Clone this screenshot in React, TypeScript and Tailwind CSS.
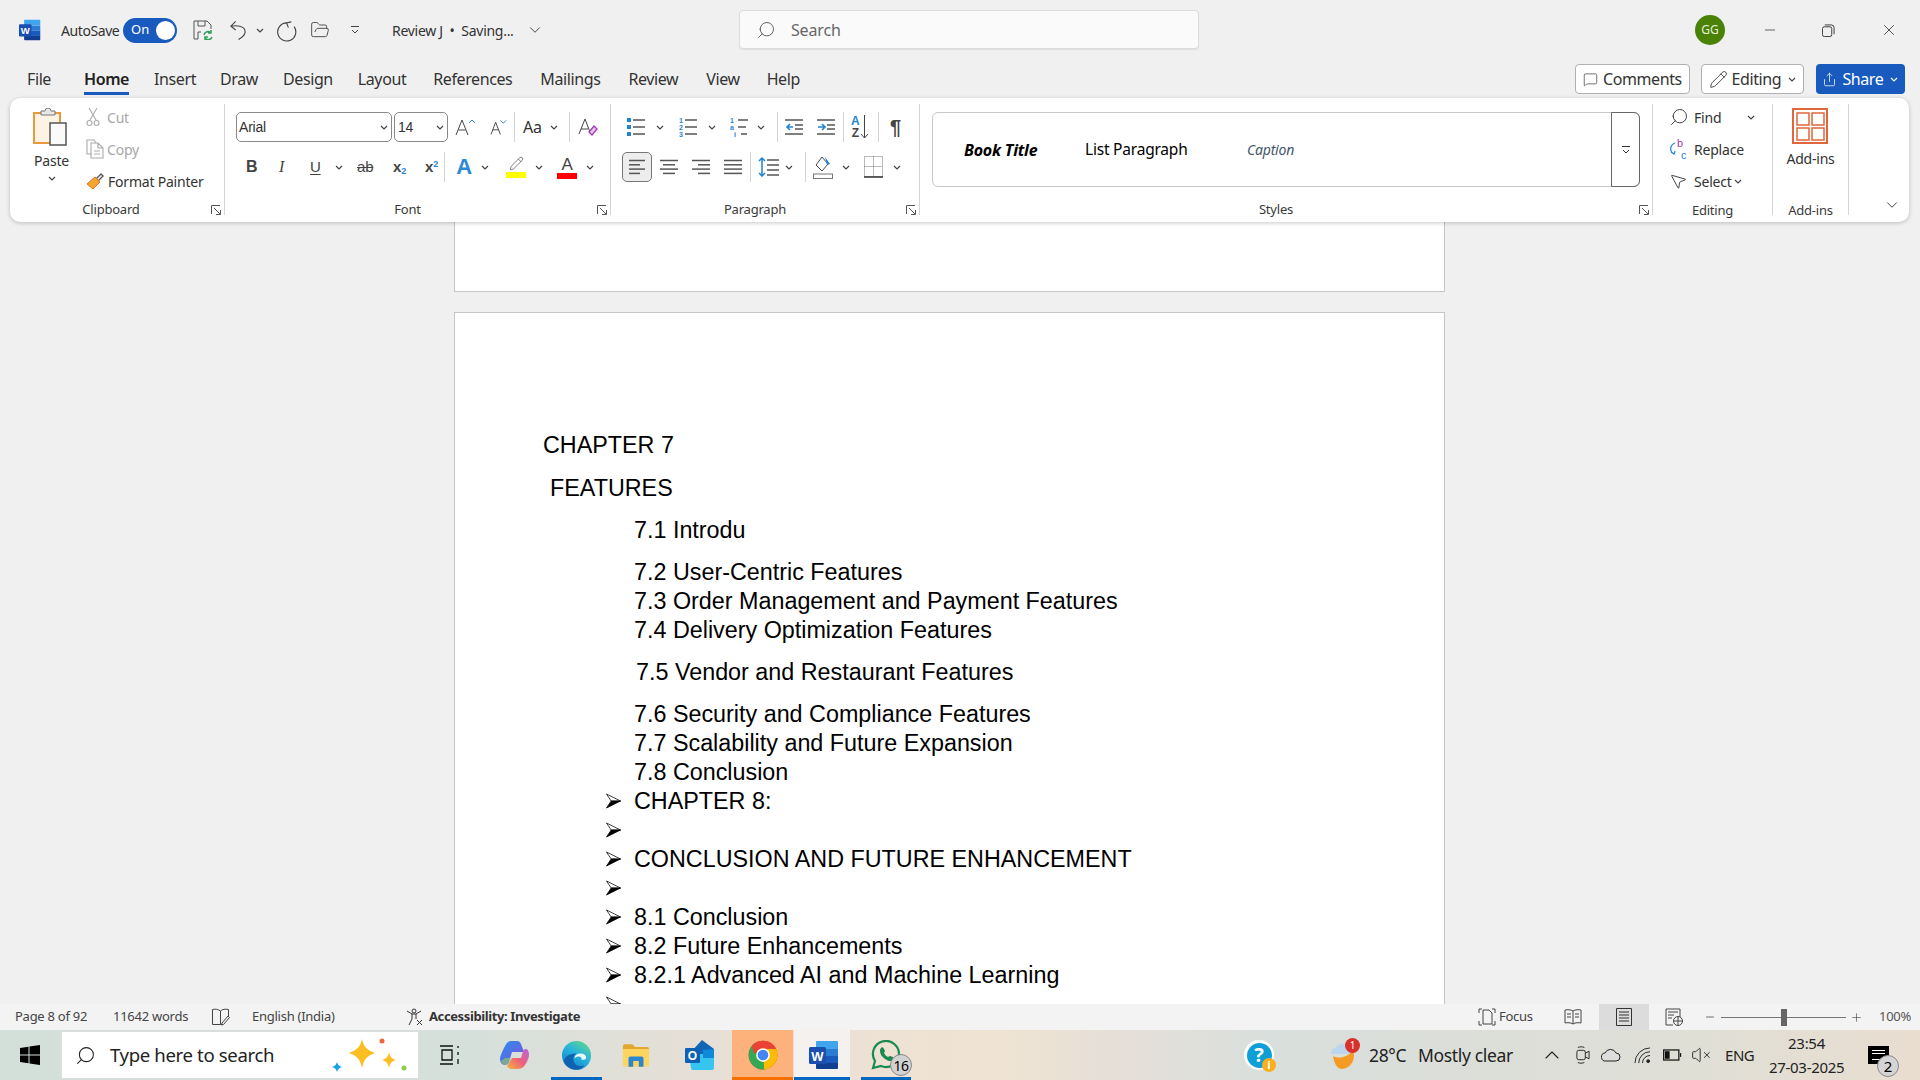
import { ChevronDown, ChevronUp, FolderOpen, MessageSquare, Minus, MousePointer2, Pencil, Plus, Search, Share, VolumeX, X } from 'lucide-react';
import type { ReactNode } from 'react';

const Caret = ({ className = '' }: { className?: string }) => (
  <svg viewBox="0 0 8 5" className={`w-[8px] h-[5px] shrink-0 ${className}`} fill="none" stroke="#444" strokeWidth="1.2">
    <path d="M1 1l3 3 3-3" />
  </svg>
);

const Sep = ({ className = '' }: { className?: string }) => <div className={`w-px h-[30px] bg-[#d4d4d4] shrink-0 ${className}`} />;

const Launcher = ({ className = '' }: { className?: string }) => (
  <svg viewBox="0 0 10 10" className={`absolute bottom-0 w-[10px] h-[10px] ${className}`} fill="none" stroke="#555" strokeWidth="1">
    <path d="M.5 9V.5H9M3 3l6 6M5 9.5h4.5V5" />
  </svg>
);

function Group({ width, label, labelClass = '', children }: { width: string; label: string; labelClass?: string; children: ReactNode }) {
  return (
    <div className={`relative h-[111px] shrink-0 border-r border-[#d4d4d4] flex flex-col ${width}`}>
      <div className="h-[98px] shrink-0">{children}</div>
      <div className={`text-[13px] leading-[14px] text-center text-[#3a3a3a] ${labelClass}`}>{label}</div>
    </div>
  );
}

const Lines = ({ className = '', rows, color = '#555' }: { className?: string; rows: [number, number][]; color?: string }) => (
  <svg viewBox="0 0 18 18" className={`w-[18px] h-[18px] shrink-0 ${className}`} stroke={color} strokeWidth="1.5">
    {rows.map(([a, b], i) => (
      <path key={i} d={`M${a} ${2.5 + i * 4.3}H${b}`} />
    ))}
  </svg>
);

const ListIcon = ({ kind, className = '' }: { kind: 'b' | 'n' | 'm'; className?: string }) => (
  <svg viewBox="0 0 20 20" className={`w-[20px] h-[20px] shrink-0 ${className}`}>
    <g stroke="#555" strokeWidth="1.5">
      <path d={kind === 'm' ? 'M9 3h10M9 10h8M12 17h6' : 'M7 3h12M7 10h12M7 17h12'} />
    </g>
    {kind === 'b' && <path fill="#1f84d6" d="M1 1h4v4H1zM1 8h4v4H1zM1 15h4v4H1z" />}
    {kind !== 'b' && (
      <g fill="#1f84d6" fontSize="7" fontFamily="Liberation Sans, sans-serif" fontWeight="700">
        <text x="1" y="6">1</text>
        <text x="1" y="13">{kind === 'n' ? '2' : 'a'}</text>
        <text x={kind === 'n' ? 1 : 5} y="20">{kind === 'n' ? '3' : 'i'}</text>
      </g>
    )}
  </svg>
);

const Indent = ({ flip = false, className = '' }: { flip?: boolean; className?: string }) => (
  <svg viewBox="0 0 18 18" className={`w-[18px] h-[18px] shrink-0 ${className}`} fill="none">
    <path stroke="#555" strokeWidth="1.4" d="M0 2h18M10 7h8M10 11h8M0 16h18" />
    <path stroke="#1f84d6" strokeWidth="1.6" d={flip ? 'M1 9h6M5 6l3 3-3 3' : 'M8 9H2M5 6L2 9l3 3'} />
  </svg>
);

function WordLogo({ className = '' }: { className?: string }) {
  return (
    <svg viewBox="0 0 30 30" className={className}>
      <path fill="#41a5ee" d="M8 1h20a1 1 0 011 1v7H7V2a1 1 0 011-1z" />
      <path fill="#2b7cd3" d="M7 9h22v7H7z" />
      <path fill="#185abd" d="M7 16h22v7H7z" />
      <path fill="#103f91" d="M7 23h22v5a1 1 0 01-1 1H8a1 1 0 01-1-1z" />
      <rect x="0" y="7" width="17" height="17" rx="1.5" fill="#1a4fb0" />
      <text x="8.5" y="20.5" textAnchor="middle" fill="#fff" fontSize="13" fontWeight="700" fontFamily="Liberation Sans, sans-serif">W</text>
    </svg>
  );
}

const ChromeLogo = () => (
  <svg viewBox="0 0 48 48" className="w-[30px] h-[30px]">
    <defs>
      <clipPath id="chromeClip"><circle cx="24" cy="24" r="23" /></clipPath>
    </defs>
    <g clipPath="url(#chromeClip)">
      <rect width="48" height="48" fill="#ea4335" />
      <path fill="#34a853" d="M24 24L12 2-8 10v40h36z" />
      <path fill="#fbbc04" d="M24 14h24v34H26z" />
      <path fill="#ea4335" d="M3 0h45v14H24L10 22z" />
    </g>
    <circle cx="24" cy="24" r="11" fill="#fff" />
    <circle cx="24" cy="24" r="8.5" fill="#4285f4" />
  </svg>
);

const EdgeLogo = () => (
  <svg viewBox="0 0 32 32" className="w-[31px] h-[31px]">
    <defs>
      <linearGradient id="edgeA" x1="0.8" y1="0" x2="0.2" y2="1">
        <stop offset="0" stopColor="#5fd68a" />
        <stop offset="0.45" stopColor="#25b4e0" />
        <stop offset="1" stopColor="#1478c8" />
      </linearGradient>
    </defs>
    <circle cx="16" cy="16" r="15" fill="url(#edgeA)" />
    <path fill="#0f62ad" d="M3 22c2 6 10 10 16 8 2-1 4-2 5-4-5 2-10 1-11-5-1-3 1-6 3-7-6 0-12 2-13 8z" />
    <path fill="#eef8f6" d="M14 19c0-3 3-5 6-5 4 0 6 2 6 4 0 2-3 3-5 2 1-2-1-3-3-3-2 0-3 1-4 2z" />
  </svg>
);

const CopilotLogo = () => (
  <svg viewBox="0 0 30 30" className="w-[30px] h-[30px]">
    <defs>
      <linearGradient id="copA" x1="0" y1="0" x2="1" y2="1">
        <stop offset="0" stopColor="#2b8ff0" />
        <stop offset="1" stopColor="#7e4fd8" />
      </linearGradient>
      <linearGradient id="copB" x1="0" y1="1" x2="1" y2="0">
        <stop offset="0" stopColor="#f5b63a" />
        <stop offset="0.5" stopColor="#ef5f7a" />
        <stop offset="1" stopColor="#b766e0" />
      </linearGradient>
    </defs>
    <path fill="url(#copA)" d="M12 1h6c2 0 3 1 4 3l3 8H13l-3 10c-1 2-2 3-4 3-3 0-5-3-5-6 0-3 2-7 4-11 2-4 4-7 7-7z" />
    <path fill="url(#copB)" d="M18 29h-6c-2 0-3-1-4-3l5-8h9l2-7c1-2 2-2 3-2 2 0 3 3 3 6 0 3-2 7-4 10-2 3-5 4-8 4z" />
    <path fill="#8fd35f" d="M2 21c1 3 3 4 5 4 1 0 2-1 3-3l2-4H6z" opacity=".6" />
  </svg>
);

const FilesLogo = () => (
  <svg viewBox="0 0 30 26" className="w-[28px] h-[25px]">
    <path fill="#e3a72f" d="M1 3a2 2 0 012-2h8l3 3h13a2 2 0 012 2v3H1z" />
    <path fill="#fbd55f" d="M1 6h28v17a2 2 0 01-2 2H3a2 2 0 01-2-2z" />
    <path fill="#2a86d1" d="M7 25v-9a2 2 0 012-2h12a2 2 0 012 2v9h-5v-6h-6v6z" />
  </svg>
);

const OutlookLogo = () => (
  <svg viewBox="0 0 30 32" className="w-[30px] h-[32px]">
    <path fill="#1066b5" d="M17 1l12 9v6L16 22 5 14z" />
    <path fill="#36c5f0" d="M4 15h25v14a2 2 0 01-2 2H8a2 2 0 01-2-2z" />
    <path fill="#0f8ad8" d="M18 11l11-1v9H18z" />
    <rect x="0" y="9" width="15" height="15" rx="1" fill="#0f62b3" />
    <text x="7.5" y="21" textAnchor="middle" fill="#fff" fontSize="12" fontWeight="700" fontFamily="Liberation Sans, sans-serif">O</text>
  </svg>
);

const WhatsApp = () => (
  <svg viewBox="0 0 30 30" className="w-[30px] h-[30px]" fill="none">
    <path stroke="#198a50" strokeWidth="2.2" d="M2 28l2-7A13 13 0 1110 26z" />
    <path fill="#198a50" d="M10 8c1-1 2-1 3 1l1 2-1 2c1 2 2 3 4 4l2-1 3 1c1 1 1 2 0 3-2 2-5 1-8-1-3-2-5-5-5-8 0-1 0-2 1-3z" />
  </svg>
);

const Sparkles = () => (
  <svg viewBox="0 0 76 36" className="w-[76px] h-[36px]">
    <path fill="#fbbf24" d="M30 2c2 8 5 11 13 14-8 3-11 6-13 15-2-9-5-12-13-15 8-3 11-6 13-14z" />
    <path fill="#fbbf24" d="M57 15c1 5 3 7 7 8-4 1-6 3-7 8-1-5-3-7-7-8 4-1 6-3 7-8z" />
    <path fill="#1ba1e8" d="M5 25c1 3 2 4 5 5-3 1-4 2-5 5-1-3-2-4-5-5 3-1 4-2 5-5z" />
    <circle cx="50" cy="4" r="2.5" fill="#f0683a" />
    <circle cx="72" cy="31" r="2.5" fill="#8ccf3f" />
  </svg>
);

// Word's arrow bullet: white upper half, black lower half
const Bullet = () => (
  <span className="w-[28px] ml-[1px] shrink-0 flex items-center">
    <svg viewBox="0 0 16 16" className="w-[15px] h-[16px] mt-[-2px] shrink-0">
      <path d="M.5.5L15.5 8H5.5z" fill="#fff" stroke="#000" strokeWidth=".8" />
      <path d="M.5 15.5L15.5 8H5.5z" fill="#000" stroke="#000" strokeWidth=".8" />
    </svg>
  </span>
);

function DocLine({ className = 'pl-[179px]', bullet = false, children }: { className?: string; bullet?: boolean; children?: ReactNode }) {
  return (
    <div className={`h-[29px] leading-[29px] flex whitespace-pre ${bullet ? 'pl-[150px]' : className}`}>
      {bullet && <Bullet />}
      {children}
    </div>
  );
}

export default function App() {
  return (
    <div className="w-full h-screen overflow-hidden flex flex-col bg-[#f0f0f0] text-[#333] font-['Noto_Sans',sans-serif]">
      {/* title bar */}
      <div className="h-[60px] shrink-0 flex items-center">
        <WordLogo className="w-[22px] h-[22px] ml-[19px] shrink-0" />
        <span className="ml-[20px] w-[62px] text-[14px] tracking-[-0.03em]">AutoSave</span>
        <div className="w-[54px] h-[25px] rounded-full bg-[#185abd] flex items-center justify-between pl-[8px] pr-[2px] text-white text-[13px]">
          On
          <div className="w-[19px] h-[19px] rounded-full bg-white" />
        </div>
        <svg viewBox="0 0 20 20" className="ml-[16px] w-[20px] h-[20px]" fill="none" stroke="#555">
          <path d="M1 1h13l4 4v4M5 19H1V1M5 1v5h7V1M5 19v-7h3" />
          <path stroke="#2f9e58" strokeWidth="1.5" d="M11 15a4 4 0 017-2m1 4a4 4 0 01-7 1M18 10v3h-3M12 20v-3h3" />
        </svg>
        <svg viewBox="0 0 20 22" className="ml-[16px] w-[19px] h-[22px]" fill="none" stroke="#444" strokeWidth="1.2">
          <path d="M7 2L2 7l5 4M2 7c5-1 15-1 15 6 0 4-4 6-7 8" />
        </svg>
        <Caret className="ml-[8px]" />
        <svg viewBox="0 0 22 24" className="ml-[12px] w-[21px] h-[23px]" fill="none" stroke="#444" strokeWidth="1.2">
          <path d="M6 3l5 1-2 5M11 4a9.5 9.5 0 11-8 4" transform="matrix(-1 0 0 1 22 0)" />
        </svg>
        <FolderOpen className="ml-[13px] w-[20px] h-[20px]" strokeWidth={1.1} color="#444" />
        <svg viewBox="0 0 10 10" className="ml-[20px] w-[10px] h-[10px]" fill="none" stroke="#444">
          <path d="M1 1.5h8M2 5l3 3 3-3" />
        </svg>
        <span className="ml-[32px] w-[130px] text-[14px] tracking-[-0.02em] whitespace-nowrap">Review J&nbsp; •&nbsp; Saving...</span>
        <ChevronDown className="ml-[4px] w-[18px] h-[18px]" strokeWidth={1.2} />
        <div className="ml-[195px] mt-[-1px] w-[460px] h-[39px] bg-[#fafafa] border border-[#dcdcdc] rounded-[4px] shadow-[0_1px_1px_rgba(0,0,0,0.08)] flex items-center">
          <Search className="ml-[16px] w-[20px] h-[20px] -scale-x-100" strokeWidth={1.1} color="#555" />
          <span className="ml-[15px] text-[16px] text-[#666] tracking-[-0.01em]">Search</span>
        </div>
        <div className="ml-[496px] w-[30px] h-[30px] rounded-full bg-[#498205] text-[#e8f0dc] text-[12px] flex items-center justify-center">GG</div>
        <Minus className="ml-[37px] w-[16px] h-[16px]" strokeWidth={1.1} />
        <svg viewBox="0 0 14 14" className="ml-[44px] w-[13px] h-[13px]" fill="none" stroke="#333">
          <rect x=".5" y="3" width="10" height="10.5" rx="2" />
          <path d="M3 1h7a3 3 0 013 3v7" />
        </svg>
        <X className="ml-[45px] w-[18px] h-[18px]" strokeWidth={1.1} />
      </div>

      {/* tabs */}
      <div className="h-[38px] shrink-0 flex items-center text-[16px] tracking-[-0.025em] pl-[27px]">
        <span>File</span>
        <span className="relative ml-[33px] h-full flex items-center font-semibold text-[#222]">
          Home
          <span className="absolute left-0 right-0 top-[32px] h-[3px] bg-[#185abd]" />
        </span>
        <span className="ml-[25px]">Insert</span>
        <span className="ml-[24px]">Draw</span>
        <span className="ml-[25px]">Design</span>
        <span className="ml-[25px]">Layout</span>
        <span className="ml-[27px]">References</span>
        <span className="ml-[28px]">Mailings</span>
        <span className="ml-[28px]">Review</span>
        <span className="ml-[28px]">View</span>
        <span className="ml-[27px]">Help</span>
        <button className="ml-[775px] w-[115px] h-[30px] border border-[#b0b0b0] rounded-[4px] bg-white flex items-center justify-center gap-[5px]">
          <MessageSquare className="w-[15px] h-[15px]" strokeWidth={1.1} />
          Comments
        </button>
        <button className="ml-[11px] w-[103px] h-[30px] border border-[#b0b0b0] rounded-[4px] bg-white flex items-center justify-center gap-[4px]">
          <Pencil className="w-[19px] h-[19px]" strokeWidth={1.1} />
          Editing
          <Caret className="ml-[3px]" />
        </button>
        <button className="ml-[12px] w-[89px] h-[30px] rounded-[4px] bg-[#185abd] text-white flex items-center justify-center gap-[5px]">
          <Share className="w-[15px] h-[15px]" strokeWidth={1.2} />
          Share
          <svg viewBox="0 0 8 5" className="w-[8px] h-[5px] ml-[2px]" fill="none" stroke="#fff" strokeWidth="1.2"><path d="M1 1l3 3 3-3" /></svg>
        </button>
      </div>

      {/* ribbon */}
      <div className="relative z-10 ml-[10px] w-[1899px] h-[124px] shrink-0 bg-white rounded-[10px] shadow-[0_1px_4px_rgba(0,0,0,0.22)] flex pt-[6px] text-[14px] tracking-[-0.015em]">
        <Group width="w-[215px]" label="Clipboard" labelClass="pr-[12px]">
          <div className="flex">
            <div className="w-[83px] flex flex-col items-center">
              <svg viewBox="0 0 34 38" className="ml-[-4px] mt-[4px] w-[34px] h-[38px]" fill="none">
                <rect x="1" y="5" width="26" height="30" fill="#fdf3e4" stroke="#e89a3c" strokeWidth="2" />
                <path fill="#e8e8e8" stroke="#777" d="M8 7V3h4a3 3 0 016 0h4v4z" />
                <rect x="17" y="15" width="16" height="22" fill="#fafafa" stroke="#555" strokeWidth="1.5" />
              </svg>
              <span className="mt-[6px] leading-[18px]">Paste</span>
              <Caret className="mt-[6px]" />
            </div>
            <div className="flex flex-col mt-[-3px] pl-[6px] text-[#333]">
              <div className="h-[32px] flex items-center text-[#a8a8a8]">
                <svg viewBox="0 0 14 20" className="ml-[-13px] mr-[7px] w-[14px] h-[20px]" fill="none" stroke="#aaa" strokeWidth="1.1">
                  <path d="M3 1l7 12M11 1L4 13" />
                  <circle cx="3.5" cy="16" r="2.5" />
                  <circle cx="10.5" cy="16" r="2.5" />
                </svg>
                Cut
              </div>
              <div className="h-[32px] flex items-center text-[#a8a8a8]">
                <svg viewBox="0 0 18 20" className="ml-[-13px] mr-[3px] w-[18px] h-[20px]" fill="none" stroke="#aaa" strokeWidth="1.1">
                  <path d="M6 15H1V1h7l2 3" />
                  <path d="M5 4h7l5 5v10H5zM12 4v5h5M8 12h6M8 15h6" />
                </svg>
                Copy
              </div>
              <div className="h-[32px] flex items-center whitespace-nowrap">
                <svg viewBox="0 0 18 18" className="ml-[-13px] mr-[4px] w-[18px] h-[18px]" fill="none">
                  <path stroke="#555" strokeWidth="1.4" d="M10 7l5-5 2 2-5 5" />
                  <path fill="#f4a52e" stroke="#e0701e" d="M9 5l5 5-7 7-6-5z" />
                </svg>
                Format Painter
              </div>
            </div>
          </div>
          <Launcher className="right-[3px]" />
        </Group>

        <Group width="w-[386px]" label="Font" labelClass="pr-[20px]">
          <div className="flex items-center h-[30px] mt-[8px] pl-[11px]">
            <div className="w-[156px] h-[30px] border border-[#8a8a8a] rounded-[5px] flex items-center justify-between pl-[2px] pr-[3px] font-['Liberation_Sans',sans-serif]">
              Arial <Caret />
            </div>
            <div className="ml-[2px] w-[54px] h-[30px] border border-[#8a8a8a] rounded-[5px] flex items-center justify-between pl-[3px] pr-[3px] font-['Liberation_Sans',sans-serif]">
              14 <Caret />
            </div>
            <svg viewBox="0 0 20 18" className="ml-[7px] w-[20px] h-[18px]" fill="none">
              <path stroke="#444" d="M1 17L7 2l6 15M3.5 12h7" />
              <path stroke="#1f84d6" d="M14 5l3-3 3 3" />
            </svg>
            <svg viewBox="0 0 18 18" className="ml-[15px] w-[17px] h-[18px]" fill="none">
              <path stroke="#444" d="M1 17L6 4l5 13M3 12h6" />
              <path stroke="#1f84d6" d="M11 2l3 3 3-3" />
            </svg>
            <Sep className="ml-[7px]" />
            <span className="ml-[8px] w-[21px] text-[16px]">Aa</span>
            <Caret className="ml-[6px]" />
            <Sep className="ml-[11px]" />
            <svg viewBox="0 0 20 20" className="ml-[8px] w-[20px] h-[20px]" fill="none">
              <path stroke="#444" d="M1 17L7 2l5 13" />
              <path stroke="#444" d="M3 12h7" />
              <path fill="#e9c6f0" stroke="#a23bb5" strokeWidth="1.3" d="M11 15l5-6 3 3-5 6z" />
            </svg>
          </div>
          <div className="flex items-center h-[30px] mt-[10px] pl-[21px] text-[#444] font-['Liberation_Sans',sans-serif]">
            <span className="w-[10px] text-[16px] font-bold">B</span>
            <span className="ml-[23px] w-[10px] text-[16px] italic font-['Liberation_Serif',serif]">I</span>
            <span className="ml-[21px] w-[11px] text-[15px] underline underline-offset-2">U</span>
            <Caret className="ml-[14px]" />
            <span className="ml-[14px] w-[20px] text-[15px] line-through">ab</span>
            <span className="ml-[16px] w-[16px] text-[15px] font-bold">x<sub className="text-[9px] text-[#1f84d6]">2</sub></span>
            <span className="ml-[16px] w-[16px] text-[15px] font-bold">x<sup className="text-[9px] text-[#1f84d6]">2</sup></span>
            <Sep className="ml-[3px]" />
            <span className="ml-[9px] w-[20px] text-center text-[22px] leading-[22px] font-bold text-[#2b88d8]">A</span>
            <Caret className="ml-[7px]" />
            <div className="ml-[17px] w-[20px] flex flex-col items-center">
              <Pencil className="w-[15px] h-[15px]" strokeWidth={1.3} color="#666" />
              <div className="mt-[1px] w-[20px] h-[6px] bg-[#ffff00]" />
            </div>
            <Caret className="ml-[9px]" />
            <div className="ml-[14px] w-[20px] flex flex-col items-center text-[17px] leading-[17px]">
              A
              <div className="w-[20px] h-[6px] bg-[#ff0000]" />
            </div>
            <Caret className="ml-[9px]" />
          </div>
          <Launcher className="right-[3px]" />
        </Group>

        <Group width="w-[309px]" label="Paragraph" labelClass="pr-[20px]">
          <div className="flex items-center h-[30px] mt-[8px] pl-[15px]">
            <ListIcon kind="b" />
            <Caret className="ml-[10px]" />
            <ListIcon kind="n" className="ml-[14px]" />
            <Caret className="ml-[10px]" />
            <ListIcon kind="m" className="ml-[13px]" />
            <Caret className="ml-[8px]" />
            <Sep className="ml-[12px]" />
            <Indent className="ml-[7px]" />
            <Indent flip className="ml-[14px]" />
            <Sep className="ml-[8px]" />
            <div className="ml-[7px] w-[20px] flex items-center font-['Liberation_Sans',sans-serif] font-bold text-[12px] leading-[12px]">
              <span className="flex flex-col items-center"><span className="text-[#1f84d6]">A</span><span className="text-[#444]">Z</span></span>
              <svg viewBox="0 0 8 24" className="ml-[1px] w-[9px] h-[24px]" fill="none" stroke="#444"><path d="M4 0v23M.5 19L4 23l3.5-4" /></svg>
            </div>
            <Sep className="ml-[7px]" />
            <span className="ml-[11px] text-[20px] font-bold text-[#444] font-['Liberation_Sans',sans-serif]">¶</span>
          </div>
          <div className="flex items-center h-[30px] mt-[10px] pl-[11px]">
            <div className="w-[30px] h-[30px] rounded-[5px] bg-[#ededed] border border-[#777] flex items-center justify-center">
              <Lines rows={[[1, 17], [1, 12], [1, 17], [1, 12]]} />
            </div>
            <Lines className="ml-[8px]" rows={[[0, 18], [3, 15], [0, 18], [3, 15]]} />
            <Lines className="ml-[14px]" rows={[[0, 18], [6, 18], [0, 18], [6, 18]]} />
            <Lines className="ml-[14px]" rows={[[0, 18], [0, 18], [0, 18], [0, 18]]} />
            <Sep className="ml-[8px]" />
            <svg viewBox="0 0 21 20" className="ml-[7px] w-[21px] h-[20px]" fill="none">
              <path stroke="#555" strokeWidth="1.5" d="M9 3h12M9 8h12M9 13h12M9 18h12" />
              <path stroke="#1f84d6" strokeWidth="1.5" d="M4 1v18M1 4l3-3 3 3M1 16l3 3 3-3" />
            </svg>
            <Caret className="ml-[6px]" />
            <Sep className="ml-[12px]" />
            <svg viewBox="0 0 20 24" className="ml-[7px] w-[20px] h-[24px]" fill="none">
              <path stroke="#444" d="M3 10l6-8 6 7-6 7z" />
              <path fill="#1f84d6" d="M12 2l5 7-3 1z" />
              <rect x=".5" y="19" width="19" height="4.5" fill="#fff" stroke="#777" />
            </svg>
            <Caret className="ml-[9px]" />
            <svg viewBox="0 0 19 22" className="ml-[14px] w-[19px] h-[22px]" fill="none" stroke="#777" strokeDasharray="1 1">
              <path d="M.5.5h18v20H.5zM9.5.5v20M.5 10.5h18" />
              <path stroke="#333" strokeWidth="1.5" strokeDasharray="none" d="M0 21h19" />
            </svg>
            <Caret className="ml-[10px]" />
          </div>
          <Launcher className="right-[3px]" />
        </Group>

        <Group width="w-[733px]" label="Styles" labelClass="pr-[20px]">
          <div className="ml-[12px] mt-[8px] w-[708px] h-[75px] border border-[#c8c8c8] rounded-[6px] flex items-center">
            <span className="ml-[31px] w-[121px] text-[16px] font-bold italic text-black">Book Title</span>
            <span className="w-[162px] text-[15.5px] text-black">List Paragraph</span>
            <span className="w-[97px] text-[14px] italic text-[#44546a]">Caption</span>
            <div className="ml-auto w-[29px] h-[75px] -my-px -mr-px border border-[#666] rounded-r-[6px] flex items-center justify-center">
              <svg viewBox="0 0 10 10" className="w-[10px] h-[10px]" fill="none" stroke="#333"><path d="M1 1.5h8M2 5l3 3 3-3" /></svg>
            </div>
          </div>
          <Launcher className="right-[3px]" />
        </Group>

        <Group width="w-[120px]" label="Editing" labelClass="mt-[1px]">
          <div className="flex flex-col mt-[-3px]">
            <div className="h-[32px] flex items-center pl-[16px]">
              <Search className="w-[20px] h-[20px] -scale-x-100" strokeWidth={1.1} />
              <span className="ml-[5px] w-[53px]">Find</span>
              <Caret />
            </div>
            <div className="h-[32px] flex items-center pl-[16px]">
              <svg viewBox="0 0 20 22" className="w-[20px] h-[22px]" fill="none">
                <text x="8" y="9" fill="#a23bb5" fontSize="11" fontFamily="Liberation Sans, sans-serif">b</text>
                <text x="12" y="21" fill="#1f84d6" fontSize="11" fontFamily="Liberation Sans, sans-serif">c</text>
                <path stroke="#1f84d6" strokeWidth="1.2" d="M6 5C1 7 0 13 5 16M2 14l3 2 1-3" />
              </svg>
              <span className="ml-[5px]">Replace</span>
            </div>
            <div className="h-[32px] flex items-center pl-[16px]">
              <MousePointer2 className="w-[19px] h-[20px] -rotate-6" strokeWidth={1.1} />
              <span className="ml-[6px]">Select</span>
              <Caret className="ml-[2px]" />
            </div>
          </div>
        </Group>

        <Group width="w-[76px]" label="Add-ins" labelClass="mt-[1px]">
          <div className="flex flex-col items-center">
            <svg viewBox="0 0 36 36" className="mt-[4px] ml-[-2px] w-[36px] h-[36px]" fill="none" stroke="#e0673a" strokeWidth="1.5">
              <rect x="1" y="1" width="34" height="34" strokeWidth="2" />
              <rect x="5" y="5" width="12" height="12" />
              <rect x="20" y="5" width="12" height="12" />
              <rect x="5" y="20" width="12" height="12" />
              <rect x="20" y="20" width="12" height="12" />
            </svg>
            <span className="mt-[6px] leading-[18px]">Add-ins</span>
          </div>
        </Group>

        <ChevronDown className="ml-[34px] mt-[92px] w-[18px] h-[18px]" strokeWidth={1.2} />
      </div>

      {/* document */}
      <div className="flex-1 min-h-0 overflow-hidden">
        <div className="ml-[454px] w-[991px] h-[70px] bg-white border-x border-b border-[#c6c6c6]" />
        <div className="mt-[20px] ml-[454px] w-[991px] h-[1200px] bg-white border border-[#c6c6c6] pt-[118px] text-black text-[23.33px] font-['Liberation_Sans',Arial,sans-serif]">
          <DocLine className="pl-[88px]">CHAPTER 7</DocLine>
          <DocLine className="mt-[14px] pl-[95px]">FEATURES</DocLine>
          <DocLine className="mt-[13px] pl-[179px]">7.1 Introdu</DocLine>
          <div className="h-[13px]" />
          <DocLine>7.2 User-Centric Features</DocLine>
          <DocLine>7.3 Order Management and Payment Features</DocLine>
          <DocLine>7.4 Delivery Optimization Features</DocLine>
          <div className="h-[13px]" />
          <DocLine className="pl-[181px]">7.5 Vendor and Restaurant Features</DocLine>
          <div className="h-[13px]" />
          <DocLine>7.6 Security and Compliance Features</DocLine>
          <DocLine>7.7 Scalability and Future Expansion</DocLine>
          <DocLine>7.8 Conclusion</DocLine>
          <DocLine bullet>CHAPTER 8:</DocLine>
          <DocLine bullet />
          <DocLine bullet>CONCLUSION AND FUTURE ENHANCEMENT</DocLine>
          <DocLine bullet />
          <DocLine bullet>8.1 Conclusion</DocLine>
          <DocLine bullet>8.2 Future Enhancements</DocLine>
          <DocLine bullet>8.2.1 Advanced AI and Machine Learning</DocLine>
          <DocLine bullet />
        </div>
      </div>

      {/* status bar */}
      <div className="h-[26px] shrink-0 bg-[#f3f3f3] flex items-center text-[13px] tracking-[-0.02em] text-[#444] pl-[15px] whitespace-nowrap">
        <span className="w-[98px]">Page 8 of 92</span>
        <span className="w-[99px]">11642 words</span>
        <svg viewBox="0 0 18 18" className="w-[18px] h-[18px]" fill="none" stroke="#444">
          <path d="M8.5 3C6 1 3 1 .5 1.5v15h8V3zM8.5 3c2-2 5-2 8-1.5V8M8.5 16.5h2" />
          <path d="M10 15l6-7 1.5 1.5-6 7-2 .5z" />
        </svg>
        <span className="ml-[22px] w-[154px]">English (India)</span>
        <svg viewBox="0 0 18 18" className="w-[18px] h-[18px]" fill="none" stroke="#333">
          <circle cx="8" cy="3" r="2" />
          <path d="M1 3l5 3h4l5-3M6 6v5l-3 6M10 6v5M11 12l5 5M16 12l-5 5" />
        </svg>
        <span className="ml-[5px] w-[151px] font-bold text-[#333] tracking-[-0.03em]">Accessibility: Investigate</span>
        <svg viewBox="0 0 18 18" className="ml-[898px] w-[18px] h-[18px]" fill="none" stroke="#444">
          <path d="M1 5V1h3M14 1h3v4M1 13v4h3M14 17h3v-4M5 2h6l3 3v11H5z" />
        </svg>
        <span className="ml-[3px] w-[65px]">Focus</span>
        <svg viewBox="0 0 18 18" className="w-[18px] h-[18px]" fill="none" stroke="#444">
          <path d="M9 3C7 1.5 3 1.5 1 2v13c2-.5 6-.5 8 1 2-1.5 6-1.5 8-1V2c-2-.5-6-.5-8 1zM9 3v13M3 6h4M3 9h4M11 6h4M11 9h4" />
        </svg>
        <div className="ml-[17px] w-[50px] h-[26px] bg-[#dcdcdc] flex items-center justify-center">
          <svg viewBox="0 0 16 18" className="w-[16px] h-[18px]" fill="none" stroke="#333">
            <path d="M.5.5h15v17H.5zM3 4h10M3 7h10M3 10h10M3 13h10" />
          </svg>
        </div>
        <svg viewBox="0 0 18 18" className="ml-[16px] w-[18px] h-[18px]" fill="none" stroke="#444">
          <path d="M8 17H1V1h14v8M3 4h10M3 7h6M3 10h4" />
          <circle cx="13" cy="13" r="4.5" />
          <path d="M8.5 13h9M13 8.5v9" />
        </svg>
        <Minus className="ml-[21px] w-[12px] h-[12px]" strokeWidth={1.5} />
        <div className="relative ml-[5px] w-[125px] h-px bg-[#777]">
          <div className="absolute left-[60px] top-[-8px] w-[6px] h-[17px] bg-[#666]" />
        </div>
        <Plus className="ml-[4px] w-[13px] h-[13px]" strokeWidth={1.2} />
        <span className="ml-[16px] text-[#555]">100%</span>
      </div>

      {/* taskbar */}
      <div className="h-[50px] shrink-0 flex items-center bg-[linear-gradient(90deg,#d3dfd9_0%,#d6e0da_25%,#ebdfd6_40%,#efe4d2_52%,#e6dfd8_58%,#d9dfdc_66%,#dcded8_78%,#dfdfd6_88%,#e9ddd0_100%)]">
        <svg viewBox="0 0 20 20" className="ml-[20px] w-[20px] h-[20px]" fill="#000">
          <path d="M0 3l8.5-1.2V9.5H0zM9.5 1.6L20 0v9.5H9.5zM0 10.5h8.5v7.7L0 17zM9.5 10.5H20V20L9.5 18.4z" />
        </svg>
        <div className="ml-[21px] w-[358px] h-[48px] bg-white flex items-center border border-[#ddd]">
          <Search className="ml-[13px] w-[21px] h-[21px] -scale-x-100" strokeWidth={1.2} color="#222" />
          <span className="ml-[14px] w-[222px] text-[18.6px] tracking-[-0.02em] text-[#222]">Type here to search</span>
          <Sparkles />
        </div>
        <svg viewBox="0 0 20 20" className="ml-[21px] w-[20px] h-[20px]" fill="none" stroke="#111" strokeWidth="1.3">
          <path d="M0 1h13M2 5h10v10H2zM0 19h13M18 1v2M18 7v3M18 14v5" />
        </svg>
        <div className="ml-[39px]"><CopilotLogo /></div>
        <div className="relative ml-[22px] w-[51px] h-[50px] flex items-center justify-center">
          <EdgeLogo />
          <div className="absolute bottom-0 left-0 right-0 h-[3px] bg-[#0067c0]" />
        </div>
        <div className="ml-[20px]"><FilesLogo /></div>
        <div className="ml-[35px]"><OutlookLogo /></div>
        <div className="relative ml-[17px] w-[61px] h-[50px] bg-[#fdb27b] flex items-center justify-center">
          <ChromeLogo />
          <div className="absolute bottom-0 left-0 right-0 h-[3px] bg-[#f76f00]" />
        </div>
        <div className="relative ml-px w-[56px] h-[50px] bg-[#f5f1ee] flex items-center justify-center pl-[4px]">
          <WordLogo className="w-[30px] h-[30px]" />
          <div className="absolute bottom-0 left-0 right-0 h-[3px] bg-[#0067c0]" />
        </div>
        <div className="relative ml-[11px] w-[50px] h-[50px] flex items-center justify-center">
          <div className="ml-[-1px]"><WhatsApp /></div>
          <div className="absolute left-[29px] top-[24px] w-[22px] h-[22px] rounded-full bg-[#d2d2d2] border border-[#888] text-[14px] text-black flex items-center justify-center tracking-[-0.04em]">16</div>
          <div className="absolute bottom-0 left-0 right-0 h-[3px] bg-[#0067c0]" />
        </div>
        <div className="relative ml-[333px] w-[30px] h-[30px] rounded-full bg-white flex items-center justify-center">
          <div className="w-[25px] h-[25px] rounded-full bg-[#0e9fd8] text-white font-bold text-[20px] flex items-center justify-center">?</div>
          <div className="absolute right-[-2px] bottom-[-2px] w-[14px] h-[14px] rounded-full bg-[#f7b020] text-white text-[10px] font-bold flex items-center justify-center">i</div>
        </div>
        <div className="relative ml-[55px] w-[30px] h-[30px]">
          <svg viewBox="0 0 30 30" className="w-[30px] h-[30px]">
            <path fill="#f59a23" d="M4 16c6 3 14 2 20-6 3 8-1 18-11 19-5 0-8-6-9-13z" />
            <path fill="#bcd6ee" d="M2 14a5 5 0 015-6 6 6 0 0111-1 4 4 0 012 7z" />
          </svg>
          <div className="absolute right-[-1px] top-[-2px] w-[15px] h-[15px] rounded-full bg-[#d9302c] text-white text-[10px] flex items-center justify-center">1</div>
        </div>
        <span className="ml-[10px] w-[49px] text-[17.5px] tracking-[-0.02em] text-[#222]">28°C</span>
        <span className="w-[124px] text-[17.5px] tracking-[-0.02em] text-[#222]">Mostly clear</span>
        <ChevronUp className="w-[24px] h-[24px] ml-[-2px]" strokeWidth={1.1} color="#222" />
        <svg viewBox="0 0 16 20" className="ml-[11px] w-[15px] h-[20px]" fill="none" stroke="#222">
          <rect x="2" y="5" width="9" height="10" rx="2" />
          <path d="M11 8l4-2v8l-4-2M3 2c2-1 5-1 7 0M3 18c2 1 5 1 7 0" />
        </svg>
        <svg viewBox="0 0 20 14" className="ml-[11px] w-[20px] h-[14px]" fill="#ddd" stroke="#222">
          <path d="M5 13a4 4 0 01-1-8 6 6 0 0111 0 4 4 0 010 8z" />
        </svg>
        <svg viewBox="0 0 18 18" className="ml-[13px] w-[17px] h-[17px]" fill="none" stroke="#222">
          <path d="M1 17A16 16 0 0117 1M5 17A12 12 0 0117 5M9 17a8 8 0 018-8" />
          <circle cx="15" cy="15" r="1.5" fill="#222" />
        </svg>
        <svg viewBox="0 0 20 12" className="ml-[12px] w-[19px] h-[12px]" fill="none" stroke="#111" strokeWidth="1.3">
          <rect x=".7" y=".7" width="16" height="10.6" />
          <rect x="2" y="2" width="5" height="8" fill="#111" stroke="none" />
          <path d="M18.5 4v4" />
        </svg>
        <VolumeX className="ml-[9px] w-[20px] h-[20px]" strokeWidth={1.1} color="#222" />
        <span className="ml-[14px] w-[44px] text-[15px] tracking-[-0.03em] text-[#222]">ENG</span>
        <div className="w-[75px] text-center text-[15px] leading-[24px] tracking-[-0.02em] text-[#222]">
          23:54
          <div className="whitespace-nowrap">27-03-2025</div>
        </div>
        <div className="relative ml-[24px] w-[21px] h-[18px] bg-black">
          <div className="ml-[4px] mt-[4px] w-[13px] h-[10px] border-y border-white before:block before:h-[3px] before:border-b before:border-white" />
          <div className="absolute left-[9px] top-[9px] w-[22px] h-[22px] rounded-full bg-[#d5d5d5] border border-[#888] text-[15px] text-black flex items-center justify-center">2</div>
        </div>
      </div>
    </div>
  );
}
